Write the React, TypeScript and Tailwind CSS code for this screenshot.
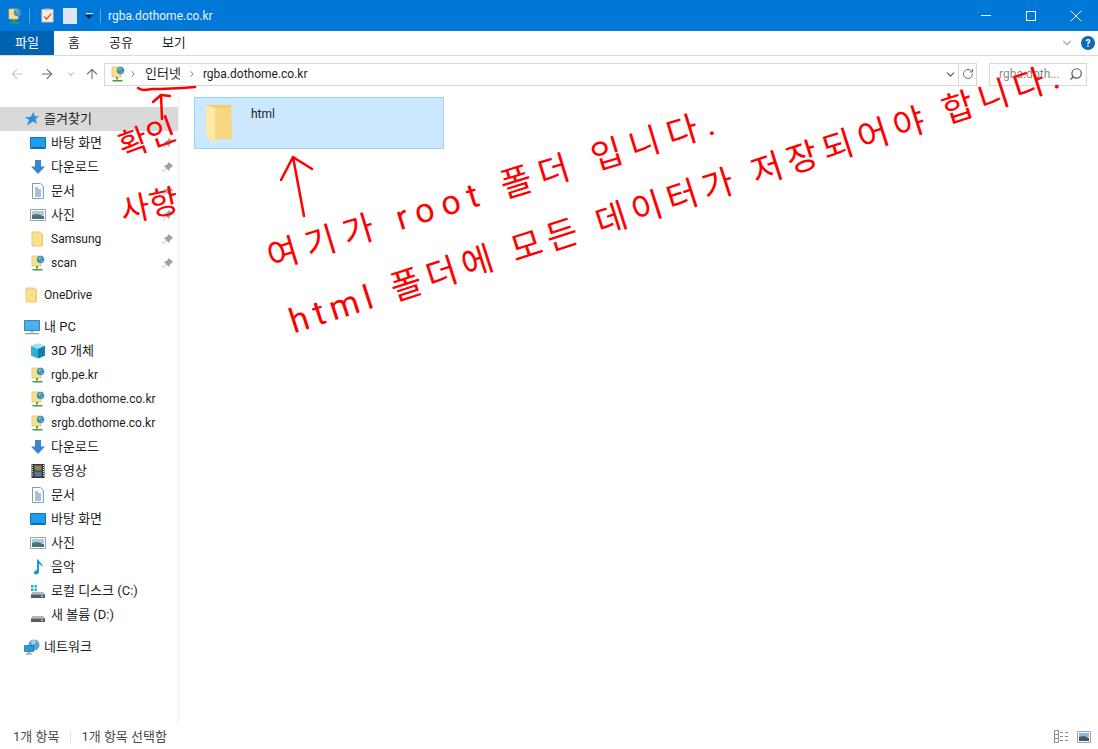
import React from 'react';
import { ArrowLeft, ArrowRight, ArrowUp, ChevronDown, ChevronRight, RotateCw, Search, X } from 'lucide-react';

// small explorer icons
const FolderIcon = ({ className = 'w-4 h-4' }: { className?: string }) => (
  <svg viewBox="0 0 16 16" className={className}>
    <path d="M2 1h8l1 1.500h1.500V15H2z" fill="#fbe08c" stroke="#dcc070" strokeWidth="0.8" />
    <path d="M11 9h2v6h-2z" fill="#f3cf6e" />
  </svg>
);

const WebFolderIcon = () => (
  <svg viewBox="0 0 16 16" className="w-4 h-4">
    <path d="M2 1h9v10H2z" fill="#fbe08c" stroke="#dcc070" strokeWidth="0.8" />
    <circle cx="10.500" cy="4.500" r="3.800" fill="#3f8fc9" />
    <path d="M8 3l2-1.500 1.500 1-1.500 2.500zM11 6l2-.5-1 2z" fill="#8fc66a" />
    <path d="M6 11h2v2.500H6z" fill="#5aa63e" />
    <path d="M2.500 14h10v1.500h-10z" fill="#4c9a35" />
  </svg>
);

const DesktopIcon = () => (
  <svg viewBox="0 0 16 16" className="w-4 h-4">
    <path d="M0.500 2.500h15v11h-15z" fill="#1b9ef0" stroke="#1672b4" />
    <path d="M2 12h12v1H2z" fill="#0c5fa0" />
  </svg>
);

const DownloadIcon = () => (
  <svg viewBox="0 0 16 16" className="w-4 h-4">
    <path d="M5 1h6v6.500h4L8 15 1 7.500h4z" fill="#3b85d0" />
  </svg>
);

const DocIcon = () => (
  <svg viewBox="0 0 16 16" className="w-4 h-4">
    <path d="M2.500 0.500h8l3 3v12h-11z" fill="#fff" stroke="#8a97a5" />
    <path d="M5 5h3M5 7h6M5 9h6M5 11h6M5 13h6" stroke="#3d8ac4" strokeWidth="1" />
  </svg>
);

const PictureIcon = () => (
  <svg viewBox="0 0 16 16" className="w-4 h-4">
    <path d="M0.500 2.500h15v11h-15z" fill="#fff" stroke="#98a2ad" />
    <path d="M2 4h12v4H2z" fill="#a9c8e4" />
    <path d="M2 8l5-1 7 2v3H2z" fill="#4d7270" />
  </svg>
);

const PinIcon = () => (
  <svg viewBox="0 0 16 16" className="w-[12px] h-[12px]">
    <path d="M9 1l6 6-2 .5-3 3-.5 3L6 10 1.500 15 1 14.500 5.500 9.500 2.500 6l3-.5 3-3z" fill="#9aa1a8" />
  </svg>
);

const StarIcon = () => (
  <svg viewBox="0 0 16 16" className="w-4 h-4">
    <path d="M9.500 1l1.300 4.200H15l-3.400 2.900 1.300 5L9 10.500 3 14.500l2-5.600L1 6h5.500z" fill="#2f8fdc" />
  </svg>
);

const PcIcon = () => (
  <svg viewBox="0 0 16 16" className="w-4 h-4">
    <path d="M0.500 1.500h15v10h-15z" fill="#46b2ee" stroke="#4b7c9f" />
    <path d="M6 12h4v1.500H6z" fill="#b8c4cc" />
    <path d="M1 14h14v1.200H1z" fill="#7f99ab" />
  </svg>
);

const CubeIcon = () => (
  <svg viewBox="0 0 16 16" className="w-4 h-4">
    <path d="M8 0.500L15 3v9.500L8 15.500 1 12.500V3z" fill="#2db2d6" />
    <path d="M8 0.500L15 3 8 6 1 3z" fill="#9fe3f2" />
    <path d="M8 6l7-3v9.500l-7 3z" fill="#137fa8" />
  </svg>
);

const FilmIcon = () => (
  <svg viewBox="0 0 16 16" className="w-4 h-4">
    <path d="M1.500 1h13v14h-13z" fill="#33393d" />
    <path d="M4.500 2.500h7v5h-7z" fill="#8d8a4c" />
    <path d="M4.500 8.500h7v5h-7z" fill="#4f7f92" />
    <path d="M2.500 2v12M13.500 2v12" stroke="#d8dcdf" strokeWidth="1" strokeDasharray="1 1" />
  </svg>
);

const MusicIcon = () => (
  <svg viewBox="0 0 16 16" className="w-4 h-4">
    <path d="M7 0.500h1.500c.5 3 5 4 4 8-.5-2-2-3-3.500-3.500V13c0 1.500-1.500 2.500-3 2.500S3.500 14.500 4 13.200 5.800 11 7 11.300z" fill="#1c93dc" />
  </svg>
);

const DiskIcon = ({ win }: { win?: boolean }) => (
  <svg viewBox="0 0 16 16" className="w-4 h-4">
    {win && <path d="M1 2h2.500v2.500H1zM4.500 2H7v2.500H4.500zM1 5.500h2.500V8H1zM4.500 5.500H7V8H4.500z" fill="#1fb1d8" />}
    <path d="M2.500 9h11l1.500 2.500H1z" fill="#b4b8bb" />
    <path d="M1 11.500h14V15H1z" fill="#565d62" />
    <path d="M11 12.700h2v1h-2z" fill="#e3e6e8" />
  </svg>
);

const NetworkIcon = () => (
  <svg viewBox="0 0 16 16" className="w-4 h-4">
    <circle cx="10" cy="6" r="5.500" fill="#5aa0d6" />
    <path d="M7 2l4-1 1 3-4 2z" fill="#a8d0ec" />
    <path d="M0.500 6.500h9v6h-9z" fill="#2f97e0" stroke="#20689e" strokeWidth="0.700" />
    <path d="M4 12.500h2V14H4zM2 14.500h6v1H2z" fill="#6b8ba3" />
  </svg>
);

type NavItem = { label: string; icon: React.ReactNode; pin?: boolean; latin?: boolean };

const quick: NavItem[] = [
  { label: '바탕 화면', icon: <DesktopIcon />, pin: true },
  { label: '다운로드', icon: <DownloadIcon />, pin: true },
  { label: '문서', icon: <DocIcon />, pin: true },
  { label: '사진', icon: <PictureIcon />, pin: true },
  { label: 'Samsung', icon: <FolderIcon />, pin: true, latin: true },
  { label: 'scan', icon: <WebFolderIcon />, pin: true, latin: true },
];

const pc: NavItem[] = [
  { label: '3D 개체', icon: <CubeIcon /> },
  { label: 'rgb.pe.kr', icon: <WebFolderIcon />, latin: true },
  { label: 'rgba.dothome.co.kr', icon: <WebFolderIcon />, latin: true },
  { label: 'srgb.dothome.co.kr', icon: <WebFolderIcon />, latin: true },
  { label: '다운로드', icon: <DownloadIcon /> },
  { label: '동영상', icon: <FilmIcon /> },
  { label: '문서', icon: <DocIcon /> },
  { label: '바탕 화면', icon: <DesktopIcon /> },
  { label: '사진', icon: <PictureIcon /> },
  { label: '음악', icon: <MusicIcon /> },
  { label: '로컬 디스크 (C:)', icon: <DiskIcon win /> },
  { label: '새 볼륨 (D:)', icon: <DiskIcon /> },
];

function TopRow({ label, icon, active, latin }: { label: string; icon: React.ReactNode; active?: boolean; latin?: boolean }) {
  return (
    <div className={`flex items-center h-6 pl-[24px] gap-[4px] ${active ? 'bg-[#d9d9d9]' : ''}`}>
      {icon}
      <span className={latin ? 'text-[12px]' : ''}>{label}</span>
    </div>
  );
}

function SubRow({ label, icon, pin, latin }: NavItem) {
  return (
    <div className="flex items-center h-6 pl-[30px] gap-[5px]">
      {icon}
      <span className={`flex-1 ${latin ? 'text-[12px]' : ''}`}>{label}</span>
      {pin && (
        <span className="pr-[4px] flex">
          <PinIcon />
        </span>
      )}
    </div>
  );
}

export default function App() {
  return (
    <div className="relative h-screen w-full overflow-hidden flex flex-col bg-white text-[13px] text-[#1e1e1e] font-['Roboto','Noto_Sans_CJK_KR',sans-serif]">
      {/* title bar */}
      <div className="h-[31px] bg-[#0078d7] flex items-center pl-[7px] text-white shrink-0">
        <WebFolderIcon />
        <div className="w-px h-[14px] bg-[#5aa9e6] ml-[6px] mr-[11px]" />
        <svg viewBox="0 0 14 16" className="w-[13px] h-[15px]">
          <path d="M1 1.500h12V15H1z" fill="#fbeee0" stroke="#d9c4ae" />
          <path d="M4 0.500h6v2H4z" fill="#b9c2cb" />
          <path d="M3.500 9l2.500 3 5-6" stroke="#d9502e" strokeWidth="1.500" fill="none" />
        </svg>
        <div className="w-[14px] h-[16px] bg-[#dfe6f3] ml-[9px]" />
        <div className="flex flex-col items-center ml-[8px] gap-px">
          <div className="w-[7px] h-px bg-[#dfeaf5]" />
          <div className="w-0 h-0 border-x-[4px] border-x-transparent border-t-[4px] border-t-[#10283d]" />
        </div>
        <div className="w-px h-[14px] bg-[#5aa9e6] ml-[7px] mr-[7px]" />
        <span className="text-[#e8f3fc] text-[12px]">rgba.dothome.co.kr</span>
        <div className="ml-auto flex items-center">
          <div className="w-[45px] flex justify-center">
            <div className="w-[10px] h-px bg-white" />
          </div>
          <div className="w-[45px] flex justify-center">
            <div className="w-[10px] h-[10px] border border-white" />
          </div>
          <div className="w-[45px] flex justify-center">
            <X size={20} strokeWidth={1.200} />
          </div>
        </div>
      </div>

      {/* ribbon tabs */}
      <div className="h-[25px] flex items-stretch border-b border-[#dadada] shrink-0">
        <div className="w-[54px] bg-[#0063b1] text-white flex items-center justify-center">파일</div>
        <div className="flex items-center pl-[14px] gap-[29px]">
          <span>홈</span>
          <span>공유</span>
          <span>보기</span>
        </div>
        <div className="ml-auto flex items-center pr-[3px] gap-[7px]">
          <ChevronDown size={14} className="text-[#a8a8a8]" />
          <div className="w-[14px] h-[14px] rounded-full bg-[#0f68b4] text-white text-[10px] font-bold flex items-center justify-center">
            ?
          </div>
        </div>
      </div>

      {/* address row */}
      <div className="h-[36px] flex items-center pl-[9px] shrink-0">
        <ArrowLeft size={16} className="text-[#c9c9c9]" strokeWidth={1.600} />
        <ArrowRight size={16} className="text-[#6d6d6d] ml-[14px]" strokeWidth={1.600} />
        <ChevronDown size={10} className="text-[#8a8a8a] ml-[11px]" strokeWidth={2} />
        <ArrowUp size={16} className="text-[#6d6d6d] ml-[8px]" strokeWidth={1.600} />
        <div className="ml-[4px] w-[873px] h-[23px] border border-[#d9d9d9] flex items-center pl-[5px]">
          <WebFolderIcon />
          <ChevronRight size={10} className="ml-[2px] text-[#777]" strokeWidth={2.200} />
          <span className="ml-[7px]">인터넷</span>
          <ChevronRight size={10} className="ml-[6px] text-[#777]" strokeWidth={2.200} />
          <span className="ml-[6px] text-[12px]">rgba.dothome.co.kr</span>
          <ChevronDown size={13} className="ml-auto text-[#555]" strokeWidth={2} />
          <div className="w-px h-full bg-[#d9d9d9] ml-[1px]" />
          <div className="w-[17px] flex justify-center">
            <RotateCw size={12} className="text-[#6d6d6d]" />
          </div>
        </div>
        <div className="ml-[12px] w-[98px] h-[23px] border border-[#d9d9d9] flex items-center pl-[9px] pr-[3px] text-[#8a8a8a] text-[12px]">
          <span>rgba.doth...</span>
          <Search size={14} className="ml-auto text-[#555] -scale-x-100" />
        </div>
      </div>

      {/* main */}
      <div className="flex-1 flex min-h-0">
        <div className="w-[179px] border-r border-[#f2f2f2] pt-[15px] shrink-0">
          <TopRow label="즐겨찾기" icon={<StarIcon />} active />
          {quick.map((item) => (
            <SubRow key={item.label} {...item} />
          ))}
          <div className="mt-2">
            <TopRow label="OneDrive" icon={<FolderIcon />} latin />
          </div>
          <div className="mt-2">
            <TopRow label="내 PC" icon={<PcIcon />} />
          </div>
          {pc.map((item) => (
            <SubRow key={item.label} {...item} />
          ))}
          <div className="mt-2">
            <TopRow label="네트워크" icon={<NetworkIcon />} />
          </div>
        </div>
        <div className="flex-1 pl-[15px] pt-[5px]">
          <div className="w-[250px] h-[52px] bg-[#cce8ff] border border-[#99d1ff] flex pl-[10px] pt-[5px]">
            <svg viewBox="0 0 28 40" className="w-[28px] h-[40px]">
              <path d="M1 2h25l1 34H5L1 30z" fill="#f3cd6b" />
              <path d="M1 2l9 3v35l-5-2-4-8z" fill="#fde9a6" />
              <path d="M10 5h16l1 31H10z" fill="#f7d77f" />
            </svg>
            <span className="ml-[18px] leading-[20px] mt-[1px] text-[12px]">html</span>
          </div>
        </div>
      </div>

      {/* status bar */}
      <div className="h-[24px] flex items-center pl-[13px] text-[#4a4a4a] shrink-0">
        <span>1개 항목</span>
        <div className="w-px h-[14px] bg-[#e6e6e6] ml-[11px] mr-[10px]" />
        <span>1개 항목 선택함</span>
        <div className="ml-auto flex items-center pr-[7px] gap-[7px]">
          <svg viewBox="0 0 16 14" className="w-[16px] h-[14px]">
            <path d="M0.500 0.500h4v4h-4zM0.500 4.500h4v4h-4zM0.500 8.500h4v4h-4z" fill="none" stroke="#8c8c8c" />
            <path d="M6 2.500h3M11 2.500h3M6 6.500h3M11 6.500h3M6 10.500h3M11 10.500h3" stroke="#8c8c8c" />
          </svg>
          <svg viewBox="0 0 14 12" className="w-[14px] h-[12px]">
            <path d="M0.500 0.500h13v11h-13z" fill="#fff" stroke="#98a2ad" />
            <path d="M2 2h10v4H2z" fill="#8fb6d8" />
            <path d="M2 6l5-1 5 2v3H2z" fill="#3f5b62" />
          </svg>
        </div>
      </div>

      {/* red hand annotations on top of the window */}
      <svg className="absolute inset-0 w-full h-full pointer-events-none" viewBox="0 0 1098 749" fill="none" stroke="#f00" strokeWidth="2.500" strokeLinecap="round" strokeLinejoin="round">
        <path d="M138 88c4 3 8 2 14 1 10 0 30-1 43-2" />
        <path d="M162 119l-1-24M153 102l8-7 9 1" />
        <path d="M304 216l-11-59M281 180l12-23 19 12" />
      </svg>
      <span className="absolute left-[118px] top-[122px] text-[32px] leading-none text-[#f00] -rotate-[20deg] pointer-events-none">확인</span>
      <span className="absolute left-[120px] top-[190px] text-[32px] leading-none text-[#f00] -rotate-[12deg] pointer-events-none">사항</span>
      <span className="absolute left-[268px] top-[241px] text-[34px] leading-none text-[#f00] whitespace-nowrap origin-left -rotate-[17deg] tracking-[8px] pointer-events-none">여기가 root 폴더 입니다.</span>
      <span className="absolute left-[290px] top-[305px] text-[34px] leading-none text-[#f00] whitespace-nowrap origin-left -rotate-[17.8deg] tracking-[6px] pointer-events-none">html 폴더에 모든 데이터가 저장되어야 합니다.</span>
    </div>
  );
}
